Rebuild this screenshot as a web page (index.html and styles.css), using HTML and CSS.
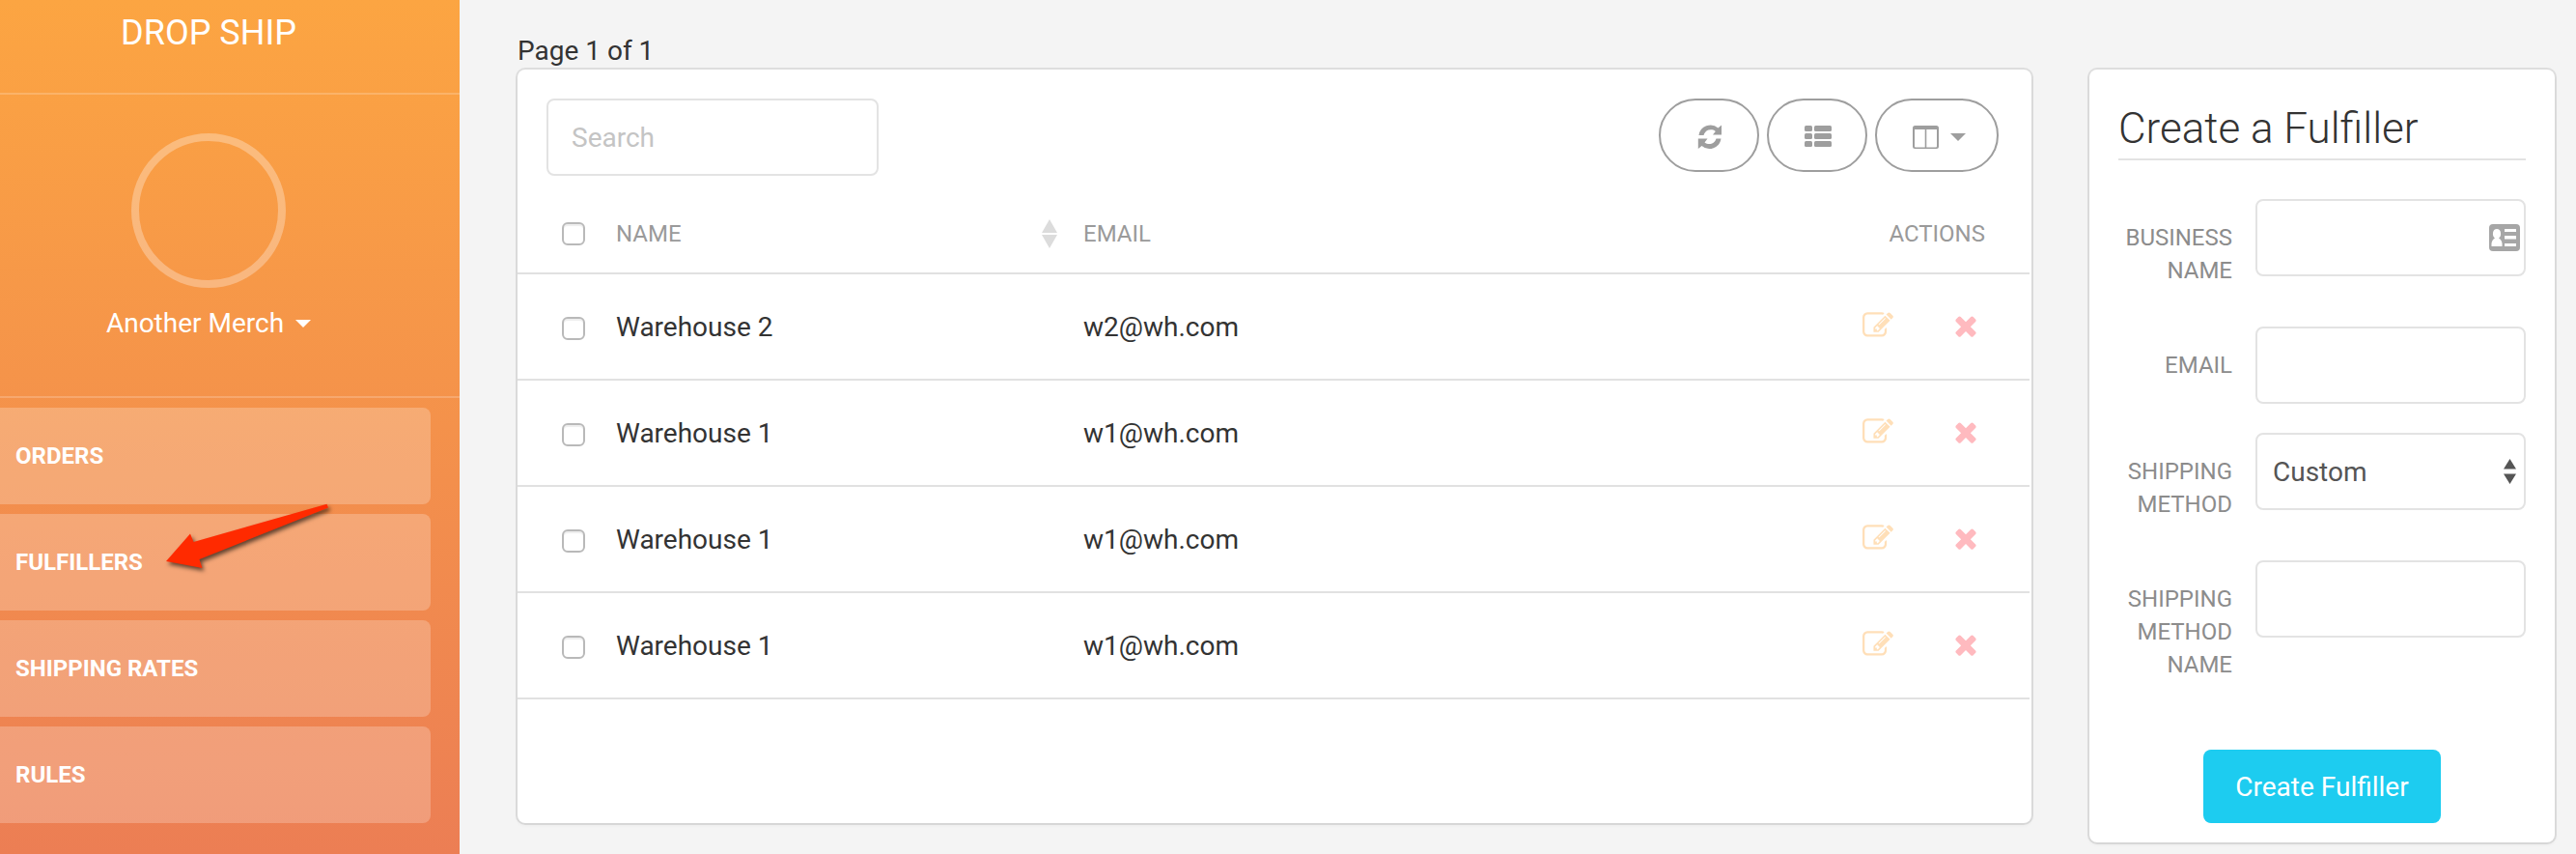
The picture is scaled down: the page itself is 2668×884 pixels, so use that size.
FILE: index.html
```html
<!DOCTYPE html>
<html lang="en">
<head>
<meta charset="utf-8">
<title>Drop Ship</title>
<link rel="stylesheet" href="styles.css">
</head>
<body>
<svg class="sprite" width="0" height="0">
  <symbol id="edit" viewBox="0 0 1792 1792"><path d="M888 1184l116-116-152-152-116 116v56h96v96h56zm440-720q-16-16-33 1l-350 350q-17 17-1 33t33-1l350-350q17-17 1-33zm80 594v190q0 119-84.5 203.5t-203.5 84.5h-832q-119 0-203.5-84.5t-84.5-203.5v-832q0-119 84.5-203.5t203.5-84.5h832q63 0 117 25 15 7 18 23 3 17-9 29l-49 49q-14 14-32 8-23-6-45-6h-832q-66 0-113 47t-47 113v832q0 66 47 113t113 47h832q66 0 113-47t47-113v-126q0-13 9-22l64-64q15-15 35-7t20 29zm-96-738l288 288-672 672h-288v-288zm444 132l-92 92-288-288 92-92q28-28 68-28t68 28l152 152q28 28 28 68t-28 68z"/></symbol>
  <symbol id="times" viewBox="0 0 1792 1792"><path d="M1490 1322q0 40-28 68l-136 136q-28 28-68 28t-68-28l-294-294-294 294q-28 28-68 28t-68-28l-136-136q-28-28-28-68t28-68l294-294-294-294q-28-28-28-68t28-68l136-136q28-28 68-28t68 28l294 294 294-294q28-28 68-28t68 28l136 136q28 28 28 68t-28 68l-294 294 294 294q28 28 28 68z"/></symbol>
</svg>
<div class="app">
  <aside class="sidebar">
    <div class="logo">DROP SHIP</div>
    <div class="user">
      <div class="photo"></div>
      <div class="user-name">Another Merch<span class="caret"></span></div>
    </div>
    <nav class="nav">
      <a class="nav-item">ORDERS</a>
      <a class="nav-item">FULFILLERS</a>
      <a class="nav-item">SHIPPING RATES</a>
      <a class="nav-item">RULES</a>
    </nav>
    <svg class="arrow" width="190" height="90" viewBox="0 0 190 90"><path d="M12 31L37 2.500L40.500 11L178.500-28.200L180-24.500L46.500 29L49.500 38Z" transform="translate(0 40)" fill="#ff2a00"/></svg>
  </aside>
  <main class="main">
    <section class="list">
      <div class="page-info">Page 1 of 1</div>
      <div class="card table-card">
        <div class="toolbar">
          <input class="search" type="text" placeholder="Search">
          <div class="tools">
            <button class="tool tool-refresh"><svg width="28" height="28" viewBox="0 0 28 28"><path d="M1.500 12A12.200 12.200 0 0 1 21.500 4.500L25 1.500V11.500H16L18.800 8A7.600 7.600 0 0 0 6.500 12ZM24.500 15.500A12.200 12.200 0 0 1 4.500 23L.8 26V15.500H10.500L7.500 19.500A7.600 7.600 0 0 0 19.500 15.500Z"/></svg></button>
            <button class="tool tool-list"><svg width="28" height="22" viewBox="0 0 28 22"><rect width="8" height="6" rx="1.500"/><rect x="10" width="18" height="6" rx="1.500"/><rect y="8" width="8" height="6" rx="1.500"/><rect x="10" y="8" width="18" height="6" rx="1.500"/><rect y="16" width="8" height="6" rx="1.500"/><rect x="10" y="16" width="18" height="6" rx="1.500"/></svg></button>
            <button class="tool tool-wide"><svg width="27" height="24" viewBox="0 0 27 24"><path fill-rule="evenodd" d="M2.500 0H24.500Q27 0 27 2.500V21.500Q27 24 24.500 24H2.500Q0 24 0 21.500V2.500Q0 0 2.500 0ZM2 4V21.500Q2 22.500 3 22.500H12.700V4ZM14.300 4V22.500H24Q25 22.500 25 21.500V4Z"/></svg><span class="caret"></span></button>
          </div>
        </div>
        <div class="row head">
          <input class="check" type="checkbox"><span class="name">NAME<svg class="sort" width="16" height="30" viewBox="0 0 16 30"><path d="M8 0L16 14H0ZM0 16H16L8 30Z"/></svg></span><span class="email">EMAIL</span><span>ACTIONS</span>
        </div>
        <div class="row"><input class="check" type="checkbox"><span class="name">Warehouse 2</span><span class="email">w2@wh.com</span><span class="actions"><svg class="edit"><use href="#edit"/></svg><svg class="times"><use href="#times"/></svg></span></div>
        <div class="row"><input class="check" type="checkbox"><span class="name">Warehouse 1</span><span class="email">w1@wh.com</span><span class="actions"><svg class="edit"><use href="#edit"/></svg><svg class="times"><use href="#times"/></svg></span></div>
        <div class="row"><input class="check" type="checkbox"><span class="name">Warehouse 1</span><span class="email">w1@wh.com</span><span class="actions"><svg class="edit"><use href="#edit"/></svg><svg class="times"><use href="#times"/></svg></span></div>
        <div class="row"><input class="check" type="checkbox"><span class="name">Warehouse 1</span><span class="email">w1@wh.com</span><span class="actions"><svg class="edit"><use href="#edit"/></svg><svg class="times"><use href="#times"/></svg></span></div>
      </div>
    </section>
    <section class="card form-card">
      <h2 class="form-title">Create a Fulfiller</h2>
      <div class="field field-two"><label class="label">BUSINESS NAME</label><div class="control"><svg class="contact" width="32" height="28" viewBox="0 0 32 28"><rect width="32" height="28" rx="4" fill="#a6a6a6"/><path fill="#fff" d="M16 5H28V8H16ZM16 12H28V15.500H16ZM16 20H28V23H16ZM2.500 23V20Q3 16 6 14.500Q3.500 12.500 4 9Q4.500 5 8 5T12 9Q12.500 12.500 10 14.500Q13 16 13.500 20V23Z"/></svg></div></div>
      <div class="field"><label class="label">EMAIL</label><div class="control"></div></div>
      <div class="field field-two"><label class="label">SHIPPING METHOD</label><div class="control select"><span>Custom</span><svg width="13" height="26" viewBox="0 0 13 26"><path d="M6.500 0L13 10.500H0ZM0 15.500H13L6.500 26Z"/></svg></div></div>
      <div class="field field-last"><label class="label">SHIPPING METHOD NAME</label><div class="control"></div></div>
      <button class="submit">Create Fulfiller</button>
    </section>
  </main>
</div>
</body>
</html>
```
FILE: styles.css
```css
* { box-sizing: border-box; }
body { margin: 0; background: #f4f4f4; color: #333; font: 28px/40px Roboto, sans-serif; overflow: hidden; }
button, input { font: inherit; margin: 0; }
.sprite { position: absolute; }
.app { display: flex; height: 884px; }

.sidebar { position: relative; width: 476px; flex: none; background: linear-gradient(#fca542, #ec7e54); color: #fff; }
.logo { height: 98px; padding: 14px 44px 0 0; border-bottom: 2px solid rgba(255,255,255,.2); font-size: 36px; text-align: center; }
.user { height: 314px; padding: 40px 44px 0 0; border-bottom: 2px solid rgba(255,255,255,.2); display: flex; flex-direction: column; align-items: center; gap: 17px; }
.photo { width: 160px; height: 160px; border: 8px solid rgba(255,255,255,.3); border-radius: 50%; }
.user-name { display: flex; align-items: center; gap: 12px; }
.caret { border: solid transparent; border-width: 8px 8px 0; border-top-color: currentColor; }
.nav { display: flex; flex-direction: column; gap: 10px; padding: 10px 30px 0 0; }
.nav-item { height: 100px; padding-left: 16px; border-radius: 0 8px 8px 0; background: rgba(255,255,255,.23); font-size: 24px; font-weight: 700; line-height: 100px; }
.arrow { position: absolute; left: 160px; top: 510px; filter: drop-shadow(2px 3px 2px rgba(0,0,0,.6)); }

.main { flex: 1; display: flex; align-items: flex-start; gap: 60px; padding: 32px 0 0 60px; }
.list { width: 1568px; }
.page-info { height: 40px; padding-top: 1px; }
.card { border-radius: 8px; background: #fff; box-shadow: 0 2px 4px rgba(0,0,0,.05), 0 0 0 2px rgba(63,63,68,.12); }
.table-card { height: 780px; padding-right: 2px; }
.toolbar { display: flex; justify-content: space-between; height: 130px; padding: 30px 32px 0 30px; }
.search { width: 344px; height: 80px; padding: 1px 24px 0; border: 2px solid #e3e3e3; border-radius: 8px; }
.search::placeholder { color: #c4c4c4; }
.tools { display: flex; gap: 8px; }
.tool { display: flex; align-items: center; justify-content: center; width: 104px; height: 76px; padding: 4px 0 0; border: 2px solid #9e9e9e; border-radius: 38px; background: none; color: #9e9e9e; }
.tool-refresh { padding-left: 3px; }
.tool-list { padding: 2px 0 0 1px; }
.tool-wide { width: 128px; gap: 12px; padding-left: 5px; }
.tool svg { fill: currentColor; }
.row { display: flex; align-items: center; height: 110px; padding: 0 46px; border-bottom: 2px solid #e1e1e1; }
.name, .email { padding-top: 1px; }
.check { appearance: none; width: 24px; height: 24px; margin: 4px 32px 0 0; border: 2px solid #b9b9b9; border-radius: 6px; background: #fff; box-shadow: inset 0 2px 1px #eee; }
.head { height: 82px; color: #9a9a9a; font-size: 24px; }
.head .check { margin-top: 0; }
.head .name, .head .email { padding-top: 0; }
.name { width: 484px; display: flex; align-items: center; justify-content: space-between; }
.sort { margin-right: 27px; fill: #dcdcdc; }
.email { flex: 1; }
.actions { display: flex; gap: 59px; margin: 0 4px 2px 0; }
.actions svg { width: 32px; height: 32px; }
.edit { fill: #ffdfb8; }
.times { fill: #ffbabf; }

.form-card { width: 482px; height: 800px; margin-top: 40px; padding: 30px; }
.form-title { margin: 0 0 40px; height: 64px; border-bottom: 2px solid #e3e3e3; font-size: 44px; font-weight: 300; line-height: 62px; }
.field { display: flex; gap: 24px; height: 110px; }
.field-two { height: 132px; }
.label { width: 118px; padding-top: 23px; color: #8c8c8c; font-size: 24px; line-height: 34px; text-align: right; }
.control { flex: 1; height: 80px; display: flex; align-items: center; justify-content: flex-end; padding-right: 4px; border: 2px solid #e3e3e3; border-radius: 8px; }
.select { justify-content: space-between; padding: 0 8px 0 16px; color: #555; fill: #555; }
.select span { padding-top: 1px; }
.field-last { height: 196px; }
.submit { display: block; width: 246px; height: 76px; margin: 0 auto; padding: 1px 0 0; border: 0; border-radius: 8px; background: #1dccf0; color: #fff; }
```
